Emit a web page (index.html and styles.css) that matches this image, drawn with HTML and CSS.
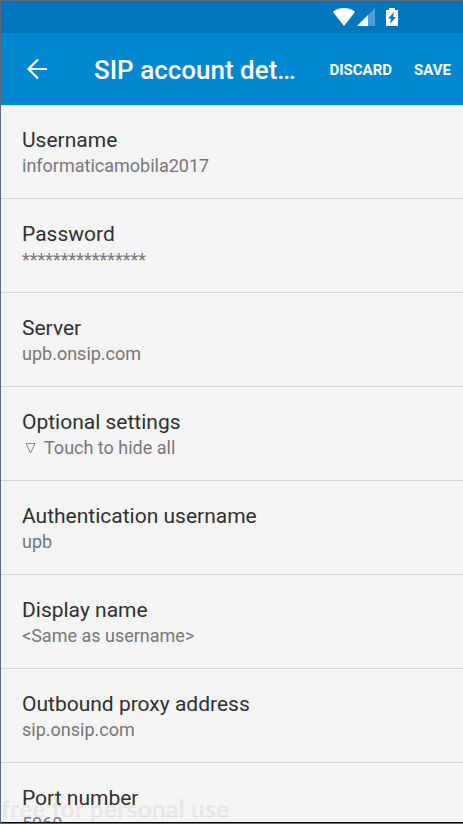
FILE: index.html
```html
<!DOCTYPE html>
<html lang="en">
<head>
<meta charset="utf-8">
<meta name="viewport" content="width=device-width, initial-scale=1">
<title>SIP account details</title>
<link rel="stylesheet" href="styles.css">
</head>
<body>
<div class="screen">
  <div class="status-bar">
    <svg class="wifi" width="24" height="20" viewBox="0 0 24 20" aria-hidden="true"><path d="M1 5Q5 1 12 1T23 5L12 19Z" fill="#fff"/></svg>
    <svg class="signal" width="18" height="20" viewBox="0 0 18 20" aria-hidden="true"><path d="M18 1V19H0Z" fill="#4ca1d4"/><path d="M11 8V19H0Z" fill="#fff"/></svg>
    <svg class="battery" width="12" height="20" viewBox="0 0 12 20" aria-hidden="true"><path d="M3 1H9V3H12V19H0V3H3Z" fill="#fff"/><path d="M8 5L2 11.500H5L4 17L10 10H7Z" fill="#0277bd"/></svg>
  </div>
  <header class="app-bar">
    <button class="back" type="button" aria-label="Back">
      <svg width="22" height="22" viewBox="0 0 22 22" aria-hidden="true"><path d="M21 11H2.500M12 1.500L2.500 11L12 20.500" fill="none" stroke="#fff" stroke-width="2.200"/></svg>
    </button>
    <h1 class="title">SIP account details</h1>
    <div class="actions">
      <button class="action" type="button">DISCARD</button>
      <button class="action" type="button">SAVE</button>
    </div>
  </header>
  <main class="settings">
    <button class="row" type="button"><span class="label">Username</span><span class="value">informaticamobila2017</span></button>
    <button class="row" type="button"><span class="label">Password</span><span class="value">****************</span></button>
    <button class="row" type="button"><span class="label">Server</span><span class="value">upb.onsip.com</span></button>
    <button class="row" type="button"><span class="label">Optional settings</span><span class="value toggle"><svg width="12" height="12" viewBox="0 0 12 12" aria-hidden="true"><path d="M1 1.500H10L5.500 11Z" fill="none" stroke="#888" stroke-width="1"/></svg>Touch to hide all</span></button>
    <button class="row" type="button"><span class="label">Authentication username</span><span class="value">upb</span></button>
    <button class="row" type="button"><span class="label">Display name</span><span class="value">&lt;Same as username&gt;</span></button>
    <button class="row" type="button"><span class="label">Outbound proxy address</span><span class="value">sip.onsip.com</span></button>
    <button class="row" type="button"><span class="label">Port number</span><span class="value">5060</span></button>
  </main>
  <div class="watermark">free for personal use</div>
</div>
</body>
</html>
```
FILE: styles.css
```css
* {
  box-sizing: border-box;
}

body {
  margin: 0;
  font-family: Roboto, "Liberation Sans", sans-serif;
  background: #5f6b78;
}

button {
  margin: 0;
  padding: 0;
  border: 0;
  background: none;
  color: inherit;
  font: inherit;
}

.screen {
  position: relative;
  display: flex;
  flex-direction: column;
  height: 100vh;
  overflow: hidden;
  border: 1px solid #5b6b7f;
  border-right: 0;
  background: #f4f4f4;
}

.status-bar {
  display: flex;
  flex: none;
  justify-content: flex-end;
  align-items: center;
  height: 32px;
  padding-right: 65px;
  background: #0277bd;
}

.signal {
  margin-left: 1px;
}

.battery {
  margin-left: 11px;
}

.app-bar {
  display: flex;
  flex: none;
  align-items: center;
  height: 72px;
  padding: 0 12px 0 25px;
  background: #0288d1;
  color: #fff;
}

.back {
  display: flex;
  flex: none;
}

.title {
  flex: 1;
  min-width: 0;
  margin: 0 24px 0 46px;
  padding-top: 2px;
  overflow: hidden;
  font-size: 26px;
  font-weight: 500;
  line-height: 36px;
  text-overflow: ellipsis;
  white-space: nowrap;
}

.actions {
  display: flex;
  flex: none;
  gap: 22px;
  padding-top: 2px;
}

.action {
  font-size: 15px;
  font-weight: 700;
  line-height: 24px;
}

.settings {
  flex: 1;
  min-height: 0;
  overflow: hidden;
  border-top: 1px solid #d5dadd;
  border-bottom: 1px solid #05070c;
}

.row {
  display: flex;
  flex-direction: column;
  width: 100%;
  height: 94px;
  padding: 21px;
  border-bottom: 1px solid #d4d4d4;
  text-align: left;
}

.row:first-child {
  height: 93px;
  padding-top: 20px;
}

.label {
  color: #303030;
  font-size: 21px;
  line-height: 28px;
}

.value {
  color: #777;
  font-size: 18px;
  line-height: 24px;
}

.toggle {
  display: flex;
  align-items: center;
  gap: 7px;
  padding-left: 3px;
}

.watermark {
  position: absolute;
  bottom: 1px;
  left: 0;
  color: rgba(170, 170, 170, 0.2);
  font-family: Lato, sans-serif;
  font-size: 25px;
  font-weight: 700;
  line-height: 28px;
  white-space: nowrap;
  pointer-events: none;
}
```
